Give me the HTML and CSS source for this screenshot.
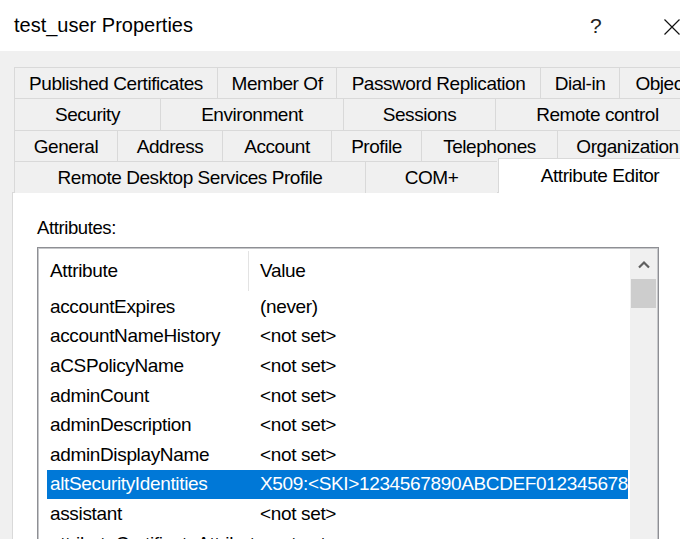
FILE: index.html
```html
<!DOCTYPE html>
<html>
<head>
<meta charset="utf-8">
<link rel="stylesheet" href="styles.css">
</head>
<body>
<div class="dialog">
  <div class="titlebar">
    <div class="title">test_user Properties</div>
    <div class="help">?</div>
    <div class="close">
      <svg width="16" height="16" viewBox="0 0 16 16"><path d="M0.5 0.5 L15.5 15.5 M15.5 0.5 L0.5 15.5" stroke="#111" stroke-width="1.2" fill="none"/></svg>
    </div>
  </div>
  <div class="body">
    <div class="tabs">
      <div class="tabrow r1">
        <div class="tab">Published Certificates</div>
        <div class="tab">Member Of</div>
        <div class="tab">Password Replication</div>
        <div class="tab">Dial-in</div>
        <div class="tab">Object</div>
      </div>
      <div class="tabrow r2">
        <div class="tab">Security</div>
        <div class="tab">Environment</div>
        <div class="tab">Sessions</div>
        <div class="tab">Remote control</div>
      </div>
      <div class="tabrow r3">
        <div class="tab">General</div>
        <div class="tab">Address</div>
        <div class="tab">Account</div>
        <div class="tab">Profile</div>
        <div class="tab">Telephones</div>
        <div class="tab">Organization</div>
      </div>
      <div class="tabrow r4">
        <div class="tab">Remote Desktop Services Profile</div>
        <div class="tab">COM+</div>
        <div class="tab sel">Attribute Editor</div>
      </div>
    </div>
    <div class="panel">
      <div class="label">Attributes:</div>
      <div class="listbox">
        <div class="listmain">
          <div class="header">
            <div class="hcol first">Attribute</div>
            <div class="hcol">Value</div>
          </div>
          <div class="row"><span class="c1">accountExpires</span><span class="c2">(never)</span></div>
          <div class="row"><span class="c1">accountNameHistory</span><span class="c2">&lt;not set&gt;</span></div>
          <div class="row"><span class="c1">aCSPolicyName</span><span class="c2">&lt;not set&gt;</span></div>
          <div class="row"><span class="c1">adminCount</span><span class="c2">&lt;not set&gt;</span></div>
          <div class="row"><span class="c1">adminDescription</span><span class="c2">&lt;not set&gt;</span></div>
          <div class="row"><span class="c1">adminDisplayName</span><span class="c2">&lt;not set&gt;</span></div>
          <div class="row selected"><span class="c1">altSecurityIdentities</span><span class="c2">X509:&lt;SKI&gt;1234567890ABCDEF0123456789ABCDEF</span></div>
          <div class="row"><span class="c1">assistant</span><span class="c2">&lt;not set&gt;</span></div>
          <div class="row"><span class="c1">attributeCertificateAttribute</span><span class="c2">&lt;not set&gt;</span></div>
        </div>
        <div class="scrollbar">
          <div class="sbtn">
            <svg width="12" height="9" viewBox="0 0 12 9"><polyline points="1,7.5 6,2.5 11,7.5" stroke="#606060" stroke-width="2.2" fill="none"/></svg>
          </div>
          <div class="thumb"></div>
        </div>
      </div>
    </div>
  </div>
</div>
</body>
</html>
```

FILE: styles.css
```css
html, body {
  margin: 0;
  padding: 0;
  width: 680px;
  height: 539px;
  overflow: hidden;
  background: #f0f0f0;
}

.dialog {
  width: 760px;
  height: 539px;
  font-family: "Liberation Sans", Arial, sans-serif;
  color: #000;
}

.titlebar {
  height: 51px;
  background: #fff;
  display: flex;
  align-items: center;
}

.title {
  font-size: 20px;
  padding-left: 14px;
  width: 576px;
}

.help {
  font-size: 21px;
  width: 74px;
  color: #222;
}

.close {
  display: flex;
  align-items: center;
  padding-top: 2px;
}

.body {
  background: #f0f0f0;
  height: 488px;
}

.tabs {
  padding-top: 16px;
  margin-left: 14px;
  font-size: 19px;
  letter-spacing: -0.45px;
}

.tabrow {
  display: grid;
  height: 31px;
}

.tabrow.r2 { height: 32px; }

.r1 { grid-template-columns: 203px 119px 204px 79px 84px; }
.r2 { grid-template-columns: 146px 183px 152px 204px; }
.r3 { grid-template-columns: 103px 105px 109px 90px 136px 140px; }
.r4 { grid-template-columns: 351px 132px 204px; }

.tab {
  border-top: 1px solid #d9d9d9;
  border-left: 1px solid #d9d9d9;
  background: #f0f0f0;
  display: flex;
  align-items: center;
  justify-content: center;
  white-space: nowrap;
  overflow: hidden;
  padding-top: 1px;
}

.tab.sel {
  position: relative;
  z-index: 1;
  background: #fff;
  align-self: start;
  height: 35px;
  margin-top: -3px;
  margin-left: 1px;
  box-sizing: border-box;
  padding-bottom: 2px;
}

.panel {
  margin-left: 12px;
  background: #fff;
  border-top: 1px solid #d9d9d9;
  border-left: 1px solid #d9d9d9;
  height: 400px;
  padding-left: 24px;
  padding-top: 25px;
  box-sizing: border-box;
}

.label {
  font-size: 18.5px;
  letter-spacing: -0.4px;
  line-height: 20px;
  height: 20px;
  margin-bottom: 9px;
}

.listbox {
  width: 622px;
  height: 330px;
  box-sizing: border-box;
  border: 1px solid #8e8f94;
  box-shadow: inset 0 0 0 1px #c6c7ca;
  padding: 1px;
  display: flex;
  font-size: 19px;
  letter-spacing: -0.35px;
}

.listmain {
  flex: 1;
  overflow: hidden;
}

.header {
  height: 43px;
  display: flex;
  align-items: center;
}

.hcol {
  padding-left: 11px;
  height: 40px;
  display: flex;
  align-items: center;
}

.hcol.first {
  width: 198px;
  border-right: 1px solid #e3e3e3;
}

.row {
  height: 29.6px;
  margin-left: 8px;
  margin-right: 2px;
  padding-left: 3px;
  display: flex;
  align-items: center;
  white-space: nowrap;
  overflow: hidden;
}

.row .c1 {
  width: 210px;
  flex: none;
}

.row .c2 {
  flex: none;
}

.row.selected {
  background: #0078d7;
  color: #fff;
}

.scrollbar {
  width: 27px;
  flex: none;
  background: #f0f0f0;
  display: flex;
  flex-direction: column;
  align-items: center;
}

.sbtn {
  height: 30px;
  width: 27px;
  display: flex;
  align-items: center;
  justify-content: center;
}

.thumb {
  width: 25px;
  height: 29px;
  background: #cdcdcd;
}
```
